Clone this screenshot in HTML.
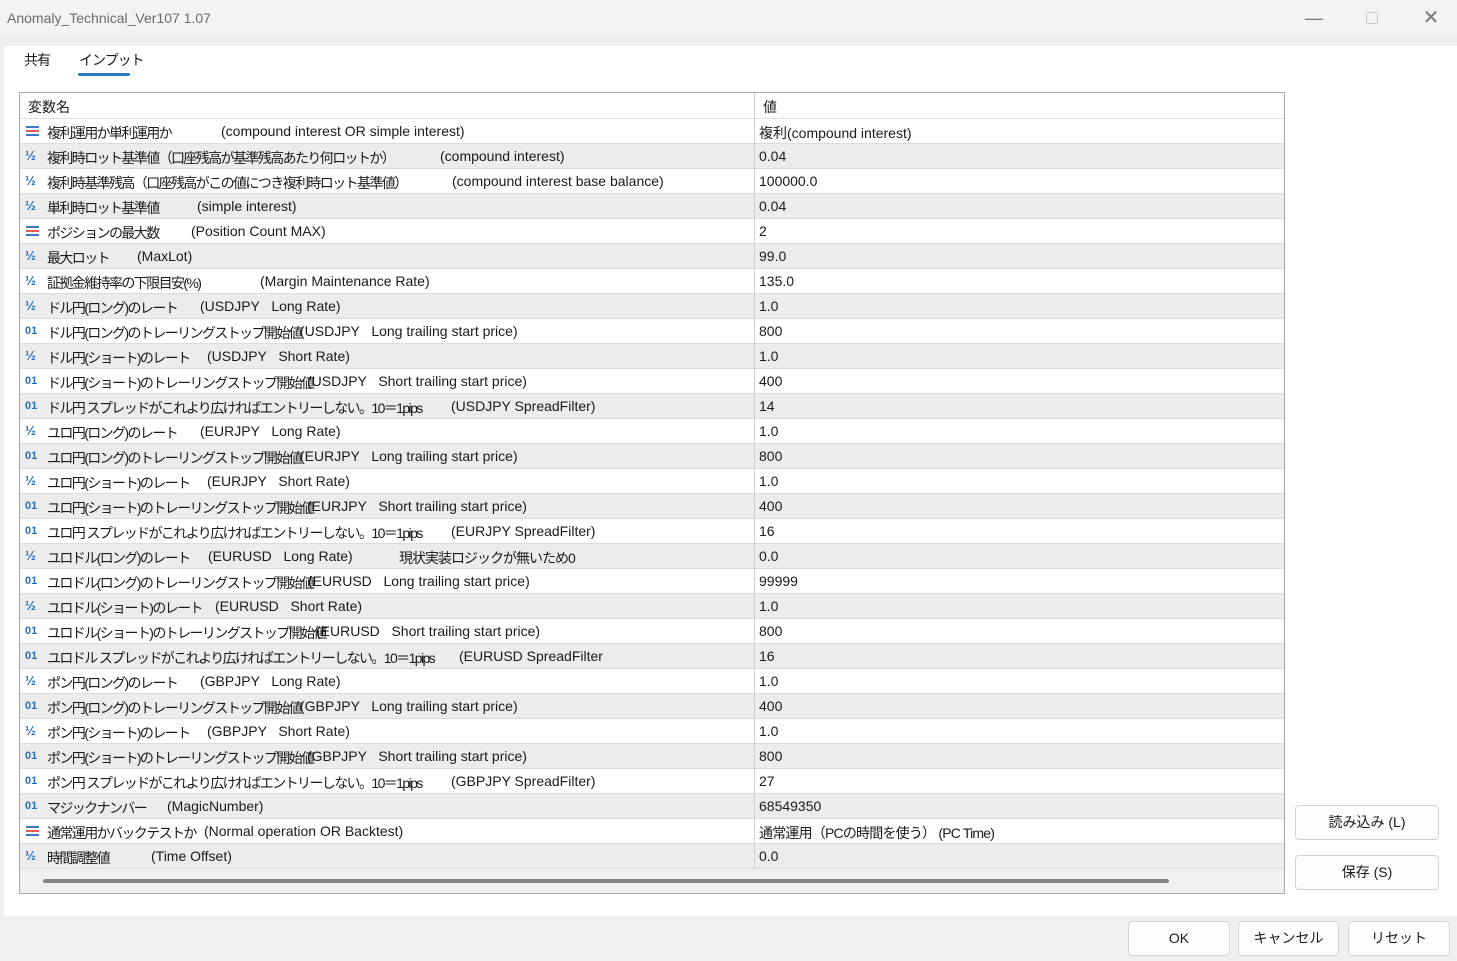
<!DOCTYPE html>
<html><head><meta charset="utf-8">
<style>
*{margin:0;padding:0;box-sizing:border-box}
body{width:1457px;height:961px;background:#f0f0f0;font-family:"Liberation Sans","Noto Sans CJK JP",sans-serif;font-size:14px;color:#1a1a1a;position:relative;overflow:hidden}
.title{position:absolute;left:0;top:0;width:1457px;height:36px;background:#f3f3f3;color:#6b6b6b;font-size:14px;line-height:36px;padding-left:7px}
.wc{position:absolute;top:0;height:36px;width:46px;color:#777;text-align:center;line-height:36px;font-size:18px}
.main{position:absolute;left:4px;top:46px;width:1453px;height:870px;background:#fff}
.tab{position:absolute;top:50px;font-size:14px;letter-spacing:-1px}
.ul{position:absolute;left:78px;top:73px;width:52px;height:3px;background:#2a78c8;border-radius:2px}
.tbl{position:absolute;left:19px;top:92px;width:1266px;height:802px;border:1px solid #a8a8a8;background:#f0f0f0;overflow:hidden}
.hd{height:26px;background:#fff;position:relative;border-bottom:1px solid #e0e0e0}
.r{height:25px;position:relative;background:#fff;border-bottom:1px solid #dcdcdc;white-space:pre}
.r.g{background:#ececec}
.r span,.hd span{position:absolute;top:4px}
.n{left:27px;letter-spacing:-1.6px}
.v{left:739px}
.col{position:absolute;left:734px;top:0;width:1px;height:776px;background:#d0d0d0}
.ic{position:absolute;left:5px;top:3px;width:16px;font-size:13px;color:#2d6db5;font-weight:bold}
.i01{font-size:11px;top:6px!important;left:5px;color:#2d6db5;font-weight:bold}
.en{position:absolute;left:6px;top:7px;width:13px;height:10px}
.en i{position:absolute;left:0;width:13px;height:2px}
.sb{position:absolute;left:23px;top:786px;width:1126px;height:4px;background:#858585;border-radius:2px}
.btn{position:absolute;background:#fdfdfd;border:1px solid #d3d3d3;border-radius:4px;text-align:center;font-size:14px;color:#1a1a1a}
</style></head><body>
<div class="title">Anomaly_Technical_Ver107 1.07</div>
<div class="wc" style="left:1291px">—</div>
<div class="wc" style="left:1349px"><div style="width:12px;height:12px;border:1px solid #ccc;margin:12px auto"></div></div>
<div class="wc" style="left:1408px;font-size:20px">✕</div>
<div class="main"></div>
<div class="tab" style="left:24px">共有</div>
<div class="tab" style="left:79px">インプット</div>
<div class="ul"></div>
<div class="tbl">
<div class="hd"><span style="left:8px">変数名</span><span style="left:743px">値</span></div>
<div class="r"><b class="en"><i style="top:0;background:#3b78c8"></i><i style="top:4px;background:#e05a5a"></i><i style="top:8px;background:#3b78c8"></i></b><span class="n">複利運用か単利運用か</span><span style="left:201px">(compound interest OR simple interest)</span><span class="v">複利(compound interest)</span></div>
<div class="r g"><span class="ic">½</span><span class="n">複利時ロット基準値（口座残高が基準残高あたり何ロットか）</span><span style="left:420px">(compound interest)</span><span class="v">0.04</span></div>
<div class="r"><span class="ic">½</span><span class="n">複利時基準残高（口座残高がこの値につき複利時ロット基準値）</span><span style="left:432px">(compound interest base balance)</span><span class="v">100000.0</span></div>
<div class="r g"><span class="ic">½</span><span class="n">単利時ロット基準値</span><span style="left:177px">(simple interest)</span><span class="v">0.04</span></div>
<div class="r"><b class="en"><i style="top:0;background:#3b78c8"></i><i style="top:4px;background:#e05a5a"></i><i style="top:8px;background:#3b78c8"></i></b><span class="n">ポジションの最大数</span><span style="left:171px">(Position Count MAX)</span><span class="v">2</span></div>
<div class="r g"><span class="ic">½</span><span class="n">最大ロット</span><span style="left:117px">(MaxLot)</span><span class="v">99.0</span></div>
<div class="r"><span class="ic">½</span><span class="n">証拠金維持率の下限目安(%)</span><span style="left:240px">(Margin Maintenance Rate)</span><span class="v">135.0</span></div>
<div class="r g"><span class="ic">½</span><span class="n">ドル円(ロング)のレート</span><span style="left:180px">(USDJPY   Long Rate)</span><span class="v">1.0</span></div>
<div class="r"><span class="ic i01">01</span><span class="n">ドル円(ロング)のトレーリングストップ開始値</span><span style="left:280px">(USDJPY   Long trailing start price)</span><span class="v">800</span></div>
<div class="r g"><span class="ic">½</span><span class="n">ドル円(ショート)のレート</span><span style="left:187px">(USDJPY   Short Rate)</span><span class="v">1.0</span></div>
<div class="r"><span class="ic i01">01</span><span class="n">ドル円(ショート)のトレーリングストップ開始値</span><span style="left:287px">(USDJPY   Short trailing start price)</span><span class="v">400</span></div>
<div class="r g"><span class="ic i01">01</span><span class="n">ドル円 スプレッドがこれより広ければエントリーしない。10＝1pips</span><span style="left:431px">(USDJPY SpreadFilter)</span><span class="v">14</span></div>
<div class="r"><span class="ic">½</span><span class="n">ユロ円(ロング)のレート</span><span style="left:180px">(EURJPY   Long Rate)</span><span class="v">1.0</span></div>
<div class="r g"><span class="ic i01">01</span><span class="n">ユロ円(ロング)のトレーリングストップ開始値</span><span style="left:280px">(EURJPY   Long trailing start price)</span><span class="v">800</span></div>
<div class="r"><span class="ic">½</span><span class="n">ユロ円(ショート)のレート</span><span style="left:187px">(EURJPY   Short Rate)</span><span class="v">1.0</span></div>
<div class="r g"><span class="ic i01">01</span><span class="n">ユロ円(ショート)のトレーリングストップ開始値</span><span style="left:287px">(EURJPY   Short trailing start price)</span><span class="v">400</span></div>
<div class="r"><span class="ic i01">01</span><span class="n">ユロ円 スプレッドがこれより広ければエントリーしない。10＝1pips</span><span style="left:431px">(EURJPY SpreadFilter)</span><span class="v">16</span></div>
<div class="r g"><span class="ic">½</span><span class="n">ユロドル(ロング)のレート</span><span style="left:188px">(EURUSD   Long Rate)</span><span style="left:379px;letter-spacing:-1px">現状実装ロジックが無いため0</span><span class="v">0.0</span></div>
<div class="r"><span class="ic i01">01</span><span class="n">ユロドル(ロング)のトレーリングストップ開始値</span><span style="left:288px">(EURUSD   Long trailing start price)</span><span class="v">99999</span></div>
<div class="r g"><span class="ic">½</span><span class="n">ユロドル(ショート)のレート</span><span style="left:195px">(EURUSD   Short Rate)</span><span class="v">1.0</span></div>
<div class="r"><span class="ic i01">01</span><span class="n">ユロドル(ショート)のトレーリングストップ開始値</span><span style="left:296px">(EURUSD   Short trailing start price)</span><span class="v">800</span></div>
<div class="r g"><span class="ic i01">01</span><span class="n">ユロドル スプレッドがこれより広ければエントリーしない。10＝1pips</span><span style="left:439px">(EURUSD SpreadFilter</span><span class="v">16</span></div>
<div class="r"><span class="ic">½</span><span class="n">ポン円(ロング)のレート</span><span style="left:180px">(GBPJPY   Long Rate)</span><span class="v">1.0</span></div>
<div class="r g"><span class="ic i01">01</span><span class="n">ポン円(ロング)のトレーリングストップ開始値</span><span style="left:280px">(GBPJPY   Long trailing start price)</span><span class="v">400</span></div>
<div class="r"><span class="ic">½</span><span class="n">ポン円(ショート)のレート</span><span style="left:187px">(GBPJPY   Short Rate)</span><span class="v">1.0</span></div>
<div class="r g"><span class="ic i01">01</span><span class="n">ポン円(ショート)のトレーリングストップ開始値</span><span style="left:287px">(GBPJPY   Short trailing start price)</span><span class="v">800</span></div>
<div class="r"><span class="ic i01">01</span><span class="n">ポン円 スプレッドがこれより広ければエントリーしない。10＝1pips</span><span style="left:431px">(GBPJPY SpreadFilter)</span><span class="v">27</span></div>
<div class="r g"><span class="ic i01">01</span><span class="n">マジックナンバー</span><span style="left:147px">(MagicNumber)</span><span class="v">68549350</span></div>
<div class="r"><b class="en"><i style="top:0;background:#3b78c8"></i><i style="top:4px;background:#e05a5a"></i><i style="top:8px;background:#3b78c8"></i></b><span class="n">通常運用かバックテストか</span><span style="left:184px">(Normal operation OR Backtest)</span><span class="v" style="letter-spacing:-0.8px">通常運用（PCの時間を使う） (PC Time)</span></div>
<div class="r g"><span class="ic">½</span><span class="n">時間調整値</span><span style="left:131px">(Time Offset)</span><span class="v">0.0</span></div>
<div class="col"></div>
<div class="sb"></div>
</div>
<div class="btn" style="left:1295px;top:805px;width:144px;height:35px;line-height:33px">読み込み (L)</div>
<div class="btn" style="left:1295px;top:855px;width:144px;height:35px;line-height:33px">保存 (S)</div>
<div class="btn" style="left:1128px;top:921px;width:102px;height:35px;line-height:33px">OK</div>
<div class="btn" style="left:1238px;top:921px;width:101px;height:35px;line-height:33px">キャンセル</div>
<div class="btn" style="left:1348px;top:921px;width:102px;height:35px;line-height:33px">リセット</div>
</body></html>
